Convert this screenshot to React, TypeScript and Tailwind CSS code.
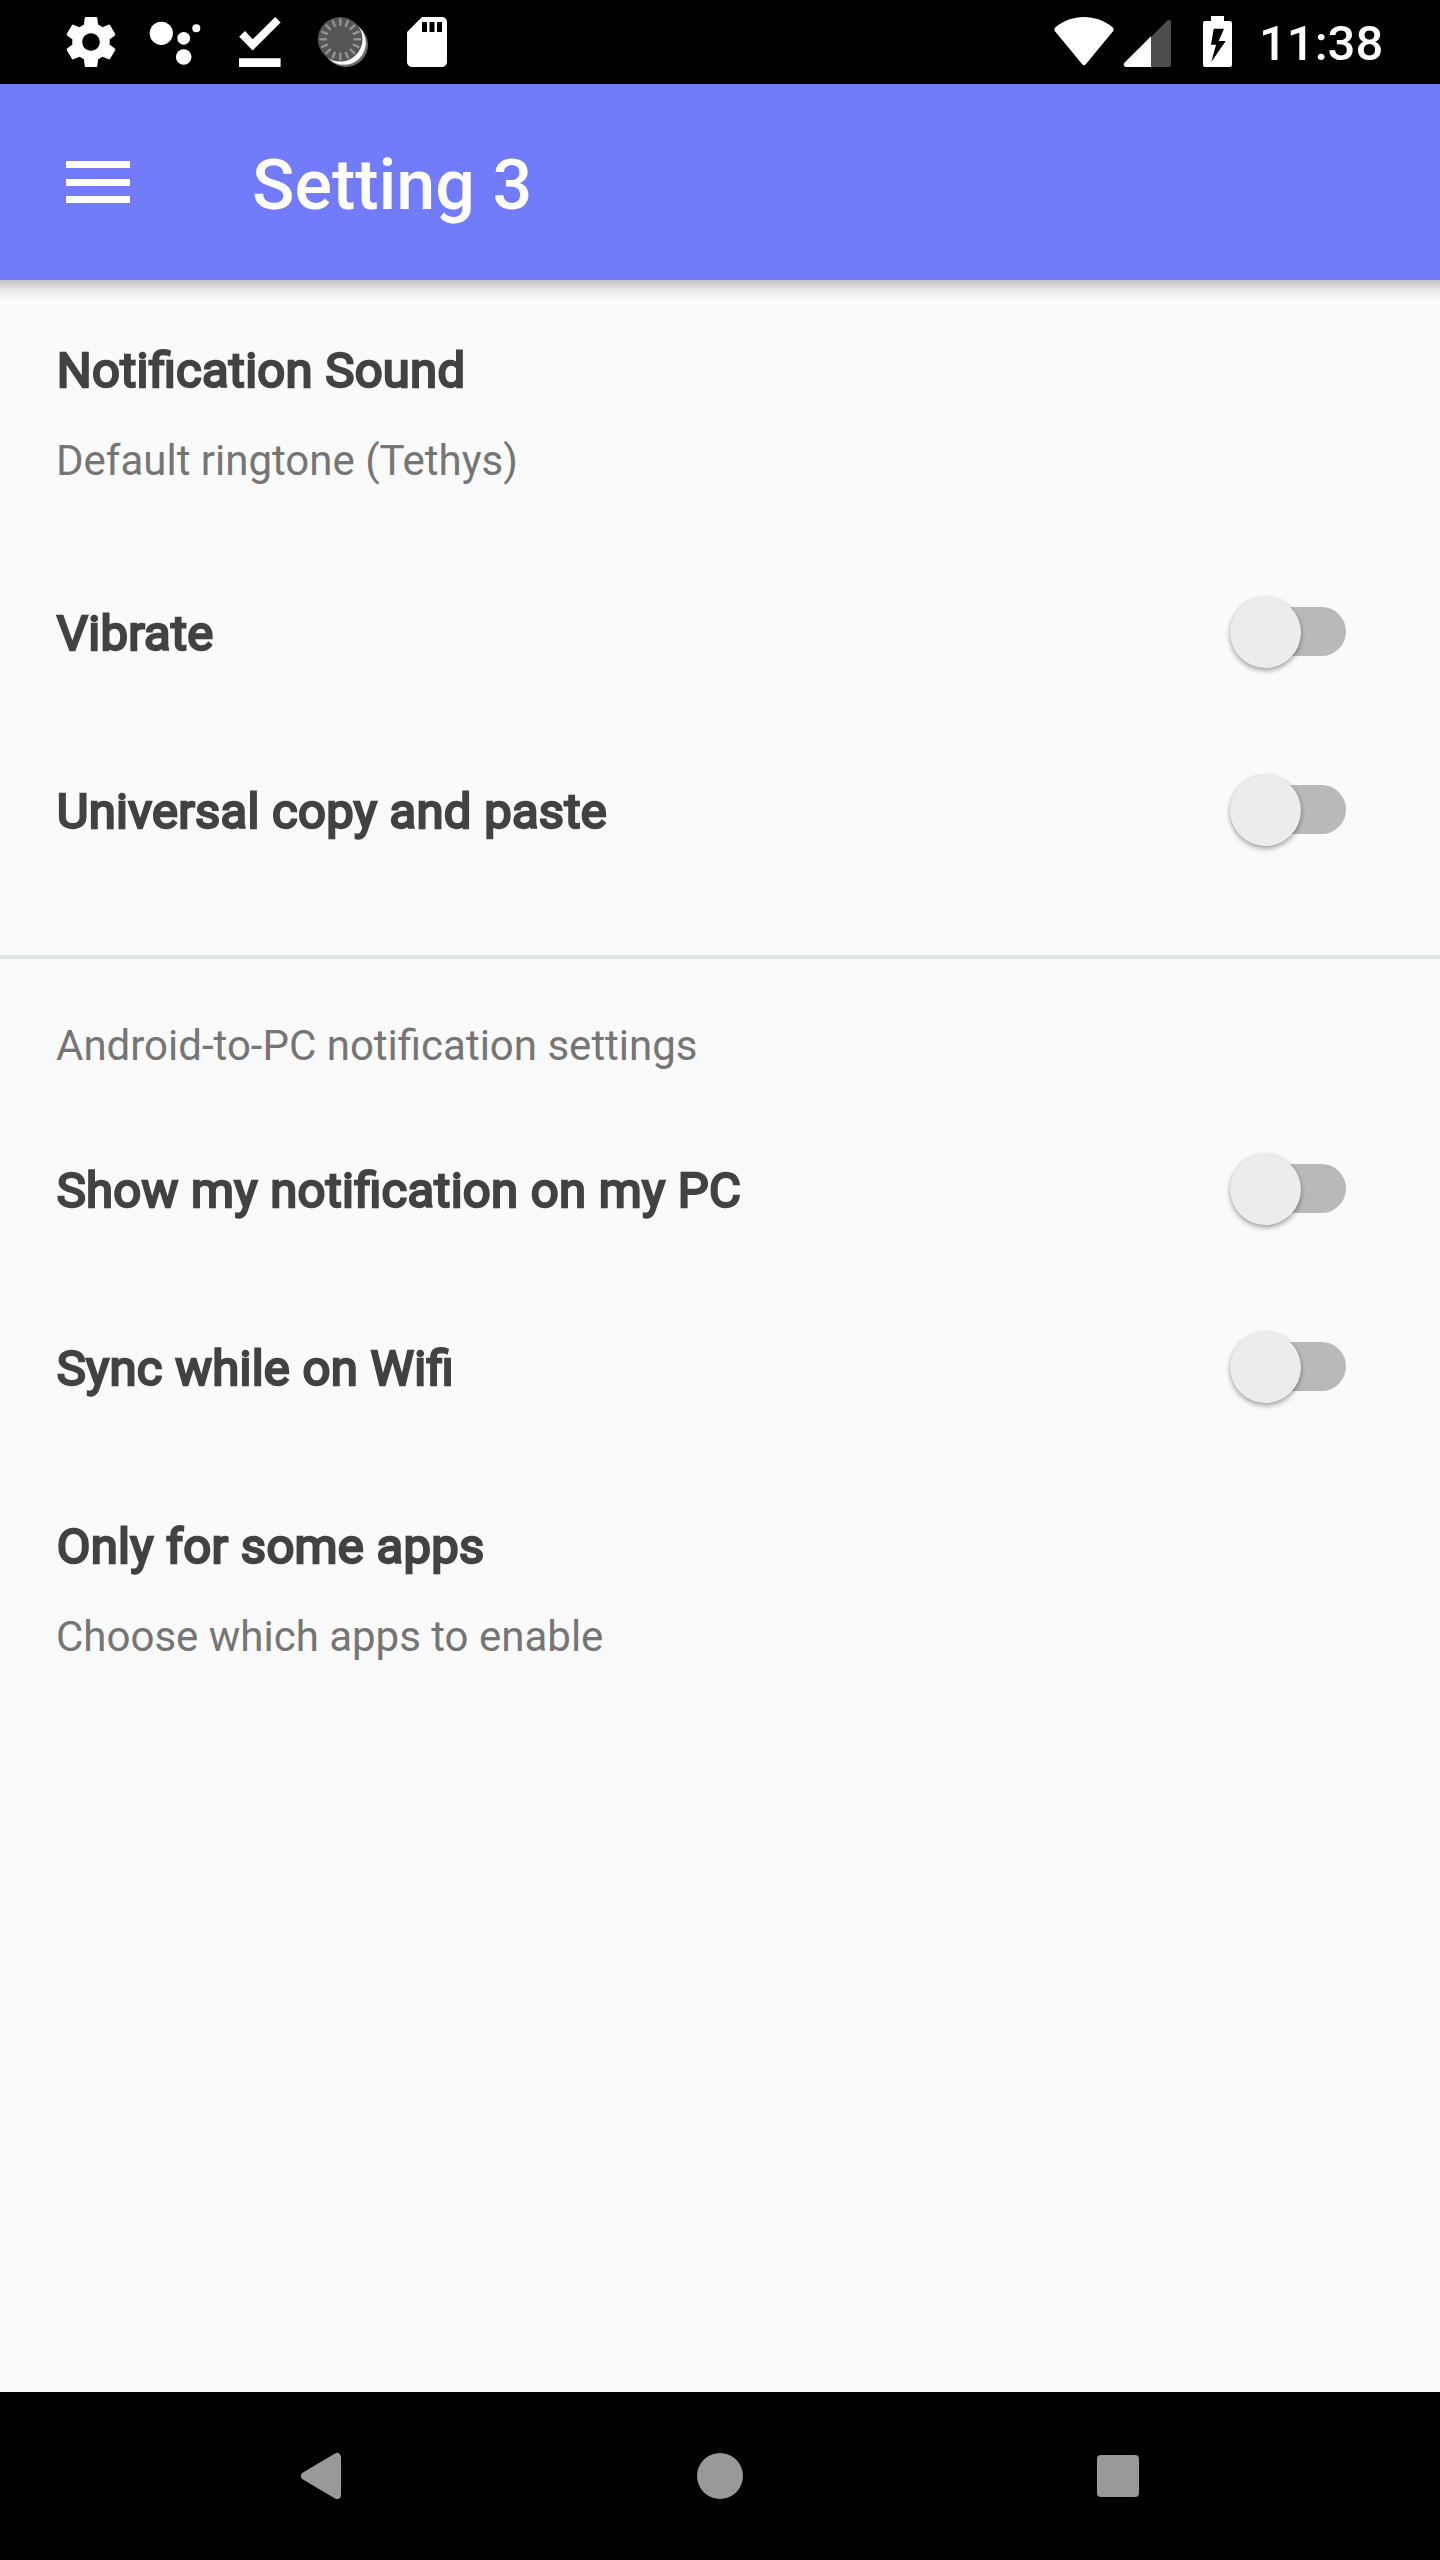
import { ReactNode, useState } from "react";

const GEAR =
  "M19.43 12.98c.04-.32.07-.64.07-.98s-.03-.66-.07-.98l2.11-1.65c.19-.15.24-.42.12-.64l-2-3.46c-.12-.22-.39-.3-.61-.22l-2.49 1c-.52-.4-1.08-.73-1.69-.98l-.38-2.65C14.46 2.18 14.25 2 14 2h-4c-.25 0-.46.18-.49.42l-.38 2.65c-.61.25-1.17.59-1.69.98l-2.49-1c-.23-.09-.49 0-.61.22l-2 3.46c-.13.22-.07.49.12.64l2.11 1.65c-.04.32-.07.65-.07.98s.03.66.07.98l-2.11 1.65c-.19.15-.24.42-.12.64l2 3.46c.12.22.39.3.61.22l2.49-1c.52.4 1.08.73 1.69.98l.38 2.65c.03.24.24.42.49.42h4c.25 0 .46-.18.49-.42l.38-2.65c.61-.25 1.17-.59 1.69-.98l2.49 1c.23.09.49 0 .61-.22l2-3.46c.12-.22.07-.49-.12-.64l-2.11-1.65zM12 15.5c-1.93 0-3.5-1.57-3.5-3.5s1.57-3.5 3.5-3.5 3.5 1.57 3.5 3.5-1.57 3.5-3.5 3.5z";
const SD_CARD =
  "M18 2h-8L4.02 8 4 20c0 1.1.9 2 2 2h12c1.1 0 2-.9 2-2V4c0-1.1-.9-2-2-2zm-6 6h-2V4h2v4zm3 0h-2V4h2v4zm3 0h-2V4h2v4z";

function StatusBar() {
  return (
    <div className="flex h-[84px] items-start justify-between bg-black pr-[56px] pl-[61px] text-white">
      <div className="flex gap-6 pt-3">
        <svg className="size-[60px]" viewBox="0 0 24 24" fill="currentColor">
          <path d={GEAR} />
        </svg>
        <svg className="size-[60px]" viewBox="0 0 60 60" fill="currentColor">
          <circle cx="16.3" cy="21.3" r="11.6" />
          <circle cx="38.7" cy="26.3" r="6.4" />
          <circle cx="51.3" cy="16.3" r="4" />
          <circle cx="38.7" cy="45" r="7.8" />
        </svg>
        <svg className="size-[60px]" viewBox="0 0 60 60" fill="currentColor">
          <path d="M10.2 24.7 16 19l7.7 8.2L46.2 5l5.4 5.4-27.9 28zM10 46.2h41.6V55H10z" />
        </svg>
        <svg className="size-[60px]" viewBox="0 0 60 60">
          <circle cx="32.7" cy="32.7" r="22.3" fill="#6b6b6b" />
          <circle cx="31" cy="31" r="21.8" fill="#fff" />
          <circle cx="27.2" cy="27.3" r="22.3" fill="#555" />
          {Array.from({ length: 16 }, (_, i) => (
            <path
              key={i}
              d="M27.3 7.6v5.2"
              stroke="#929292"
              strokeWidth="2.5"
              strokeLinecap="round"
              transform={`rotate(${i * 22.5} 27.3 27.3)`}
            />
          ))}
        </svg>
        <svg className="size-[60px]" viewBox="0 0 24 24" fill="currentColor">
          <path d={SD_CARD} />
        </svg>
      </div>
      <div className="flex items-start">
        <svg className="h-[84px] w-[60px]" viewBox="0 0 60 84" fill="currentColor">
          <path d="M1 31.2Q-.6 28.9 1.7 27C9.7 20.4 19.5 17 30 17s20.3 3.4 28.3 10q2.3 1.9.7 4.2L32 64q-2 2.4-4 0z" />
        </svg>
        <svg className="ml-[9px] h-[84px] w-[48px]" viewBox="0 0 48 84">
          <path d="M28 37 44.4 20.6Q48 18.8 48 22v42.7Q48 67 45.7 67H28z" fill="#4d4d4d" />
          <path d="M28 36.2V67H2.8Q-.4 66.2 1.2 63z" fill="#fff" />
        </svg>
        <svg className="ml-[32px] h-[84px] w-[29px]" viewBox="0 0 29 84">
          <path
            fill="#fff"
            fillRule="evenodd"
            d="M8 16h13v5h6q2 0 2 2v42q0 2-2 2H2q-2 0-2-2V23q0-2 2-2h6zM10.7 28.7 8 44.7h5L8.3 62 22.7 41h-7L21 28.7z"
          />
        </svg>
        <span className="ml-[27px] w-[125px] pt-[15px] text-[49px] leading-[58px] font-medium">11:38</span>
      </div>
    </div>
  );
}

function AppBar() {
  return (
    <header className="relative flex h-[196px] items-center bg-[#727cfb] pl-[66px]">
      <button aria-label="Menu" className="flex w-16 flex-col gap-[10.5px]">
        <i className="h-[7px] bg-white" />
        <i className="h-[7px] bg-white" />
        <i className="h-[7px] bg-white" />
      </button>
      <h1 className="ml-[122px] pt-[6px] text-[70px] leading-[82px] font-medium text-white">Setting 3</h1>
      <div className="absolute inset-x-0 top-full h-[21px] bg-gradient-to-b from-black/22 via-black/7 to-transparent" />
    </header>
  );
}

function Title({ children }: { children: ReactNode }) {
  return (
    <div className="pl-[0.75px] text-[49px] leading-[58px] tracking-[0.26px] text-[#424242] [font-feature-settings:'liga'_1] [-webkit-text-stroke:2.4px_#424242]">
      {children}
    </div>
  );
}

function Caption({ children }: { children: ReactNode }) {
  return <div className="text-[42px] leading-[50px] text-[#757575]">{children}</div>;
}

function Preference({ title, summary }: { title: string; summary: string }) {
  return (
    <div className="flex h-[263px] flex-col gap-9 px-[56px] pt-[62px]">
      <Title>{title}</Title>
      <Caption>{summary}</Caption>
    </div>
  );
}

function SwitchRow({ title }: { title: string }) {
  const [on, setOn] = useState(false);
  return (
    <div className="flex h-[178px] items-center justify-between pr-[94px] pl-[56px]">
      <div className="pt-1">
        <Title>{title}</Title>
      </div>
      <button
        role="switch"
        aria-checked={on}
        aria-label={title}
        onClick={() => setOn(!on)}
        className="relative mb-px h-[49px] w-[106px] rounded-full bg-[#b9b9b9]"
      >
        <span
          className={
            "absolute -top-[10px] size-[71px] rounded-full bg-[#ececec] shadow-[0_3px_5px_rgba(0,0,0,0.3),0_0_4px_rgba(0,0,0,0.1)] " +
            (on ? "-right-[10px]" : "-left-[10px]")
          }
        />
      </button>
    </div>
  );
}

function NavBar() {
  return (
    <nav className="flex h-[168px] items-center justify-between bg-black px-[301px] text-[#999]">
      <svg className="h-[48px] w-[41px]" viewBox="0 0 41 48">
        <path
          d="M4 24 36 5v38z"
          fill="currentColor"
          stroke="currentColor"
          strokeWidth="8"
          strokeLinejoin="round"
        />
      </svg>
      <i className="size-[46px] rounded-full bg-current" />
      <i className="size-[42px] rounded-[4px] bg-current" />
    </nav>
  );
}

export default function App() {
  return (
    <div className="flex h-[2560px] w-[1440px] flex-col bg-[#fafafa] font-[Roboto,sans-serif]">
      <StatusBar />
      <AppBar />
      <main className="flex-1">
        <Preference title="Notification Sound" summary="Default ringtone (Tethys)" />
        <SwitchRow title="Vibrate" />
        <SwitchRow title="Universal copy and paste" />
        <div className="mt-14 h-1 bg-[#dfe0e0]" />
        <div className="h-[141px] px-[56px] pt-[62px]">
          <Caption>Android-to-PC notification settings</Caption>
        </div>
        <SwitchRow title="Show my notification on my PC" />
        <SwitchRow title="Sync while on Wifi" />
        <Preference title="Only for some apps" summary="Choose which apps to enable" />
      </main>
      <NavBar />
    </div>
  );
}
